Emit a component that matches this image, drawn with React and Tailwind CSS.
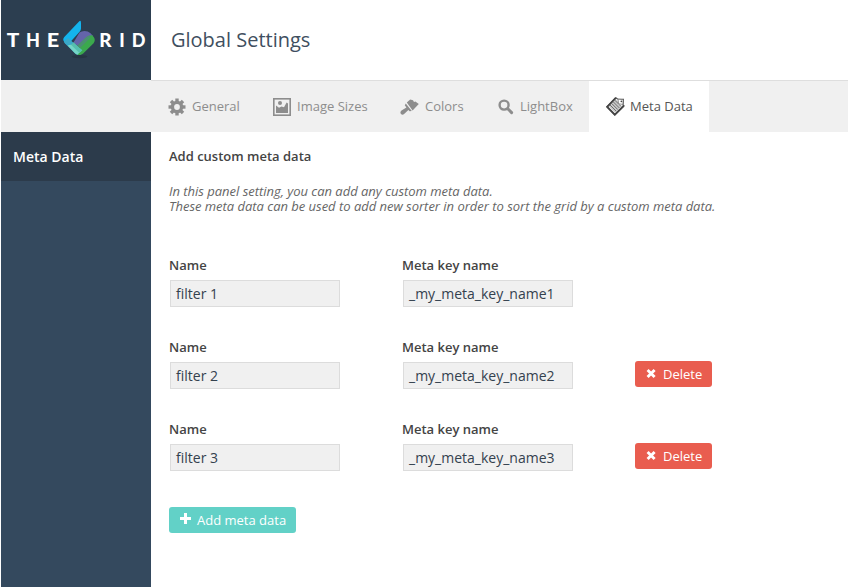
import React from "react";

function LogoMark() {
  return (
    <svg width="34" height="42" viewBox="0 0 34 42" className="shrink-0">
      <ellipse cx="17.5" cy="37.6" rx="8" ry="1.6" fill="#263543" />
      <path d="M17.3 2.2Q19 1 19 4V9.5Q19 11.4 17.6 12.8L5.4 26.2L2.3 23Q.2 20.4 2.3 18Z" fill="#14b4ee" />
      <path d="M11.5 23.5L17.5 13.5Q19.5 11.9 22.5 11.9Q26 11.9 28.5 14.3L31 17L27.5 19.5L17 27.8Z" fill="#6464aa" />
      <path d="M2 22.2L6.2 19L21 32.5L18 35.5Q15.6 36.6 13.2 34.4L2.8 24.2Q1.8 23.2 2 22.2Z" fill="#3aa9c9" />
      <path d="M5.6 26.6Q11 23.4 20.8 31.6L18.6 35.2Q15.6 36.6 13.2 34.4Z" fill="#74d5c6" />
      <path d="M30.6 16.4Q34.4 20.6 31.6 24.2L21.2 34.6Q18.4 36.8 15.6 35.4L20 31.2L15.4 26.8L24 18.4Q27.4 16 30.6 16.4Z" fill="#3ba94d" />
      <path d="M11.6 23.3L15.4 26.8L20.4 31.2L17.4 34L9 25.8Z" fill="#55bfae" />
      <path d="M15.4 26.8L24 18.4Q25.6 17.2 27.4 16.6L28 19L18 29Z" fill="#4c8f72" />
    </svg>
  );
}

function GearIcon() {
  return (
    <svg width="18" height="18" viewBox="-9 -9 18 18" fill="#8d8d8d">
      <g>
        <rect x="-1.7" y="-8.5" width="3.4" height="17" />
        <rect x="-1.7" y="-8.5" width="3.4" height="17" transform="rotate(45)" />
        <rect x="-1.7" y="-8.5" width="3.4" height="17" transform="rotate(90)" />
        <rect x="-1.7" y="-8.5" width="3.4" height="17" transform="rotate(135)" />
        <circle r="6.3" />
      </g>
      <circle r="2.9" fill="#f0f0f0" />
    </svg>
  );
}

function ImageIcon() {
  return (
    <svg width="18" height="18" viewBox="0 0 18 18" fill="#8d8d8d">
      <rect x=".8" y=".8" width="16.4" height="16.4" fill="none" stroke="#8d8d8d" strokeWidth="1.6" />
      <circle cx="7" cy="5" r="2" />
      <path d="M3 15V7.4L6 9.8L8.5 8.4L11 9.2L13.6 4.5L15 5.4V15Z" />
    </svg>
  );
}

function BrushIcon() {
  return (
    <svg width="19" height="16" viewBox="0 0 19 16" fill="#8d8d8d">
      <path d="M10.2 .4L13 1.2L14 3L15.4 2.6L18.8 5L12.6 11.4L6.8 3.6Z" />
      <path d="M5.8 4.6L11.8 12L9.6 12.2L8.4 11L4.4 14.8Q2.4 16.4 1 15Q-.4 13.4 1.5 11.6L6.4 8.4L4.8 6.2Z" />
    </svg>
  );
}

function SearchIcon() {
  return (
    <svg width="16" height="16" viewBox="0 0 16 16" fill="none" stroke="#8d8d8d">
      <circle cx="6.1" cy="6.1" r="4.5" strokeWidth="2.4" />
      <path d="M9.8 9.8L13.6 13.6" strokeWidth="3" strokeLinecap="round" />
    </svg>
  );
}

function MetaIcon() {
  return (
    <svg width="19" height="19" viewBox="0 0 19 19">
      <path d="M9.8 .8L11.6 2L17.4 2.4L17 7.8L18 8.8L8.8 17.8L1 9.8Z" fill="#fff" stroke="#505050" strokeWidth="1.2" />
      <path d="M9.8 1L1.2 9.8L8.8 17.6L17.8 8.8" fill="none" stroke="#454545" strokeWidth="1.9" />
      <path d="M9.6 2.4L12 4L12 7.4L15.6 8.4L14.6 10.2L9 15.8L3 9.8Z" fill="#c9c9c9" />
      <path d="M8.8 3.2L15 9.4M7.2 4.8L13.4 11M5.6 6.4L11.8 12.6M4 8L10.2 14.2" stroke="#555" strokeWidth=".8" />
      <path d="M12 2.2L17.2 2.6L16.8 7.4L12.6 6.8Z" fill="#fff" stroke="#666" strokeWidth=".7" />
      <circle cx="15.4" cy="4.3" r=".9" fill="#454545" />
    </svg>
  );
}

function CrossIcon() {
  return (
    <svg width="11" height="11" viewBox="0 0 11 11" className="relative -top-px mr-[6px] shrink-0">
      <path d="M1.6 2L8.6 9M8.6 2L1.6 9" stroke="#fff" strokeWidth="2.9" />
    </svg>
  );
}

function PlusIcon() {
  return (
    <svg width="11" height="11" viewBox="0 0 11 11" className="relative -top-[2px] mr-[6px] shrink-0">
      <path d="M5.5 0V11M0 5.5H11" stroke="#fff" strokeWidth="3" />
    </svg>
  );
}

function Field({ label, value }) {
  return (
    <div className="w-[233px]">
      <div className="h-[25px] text-[13px] leading-[20px] font-semibold whitespace-nowrap text-[#444]">{label}</div>
      <div className="ml-px flex h-[27px] w-[170px] items-center border border-[#dcdcdc] bg-[#f0f0f0] pl-[5px] text-[14px] text-[#34414e]">
        <span className="whitespace-nowrap">{value}</span>
      </div>
    </div>
  );
}

function MetaRow({ index, removable }) {
  return (
    <div className="flex h-[82px]">
      <Field label="Name" value={"filter " + index} />
      <Field label="Meta key name" value={"_my_meta_key_name" + index} />
      {removable && (
        <button className="mt-[24px] flex h-[26px] w-[77px] items-center rounded-[3px] bg-[#e95d4f] pl-[11px] text-[13px] text-white">
          <CrossIcon />
          <span className="pt-[2px]">Delete</span>
        </button>
      )}
    </div>
  );
}

export default function App() {
  return (
    <div className="flex h-[587px] w-[848px] overflow-hidden bg-white pl-px font-['Open_Sans',sans-serif]">
      <aside className="flex w-[150px] shrink-0 flex-col bg-[#34495e]">
        <div className="flex h-[80px] items-center bg-[#2c3e50] pl-[2px] font-['Lato',sans-serif] text-[18px] font-black text-white">
          <span className="w-[20px] scale-x-115 text-center">T</span>
          <span className="w-[20px] text-center">H</span>
          <span className="w-[20px] scale-x-120 text-center">E</span>
          <div className="-ml-px flex">
            <LogoMark />
          </div>
          <span className="ml-px w-[17px] scale-x-105 text-center">R</span>
          <span className="w-[16px] text-center">I</span>
          <span className="w-[17px] text-center">D</span>
        </div>
        <div className="h-[52px] bg-[#f0f0f0]" />
        <div className="flex h-[49px] items-center bg-[#2c3b4b] pl-[12px] text-[14px] font-semibold text-white">Meta Data</div>
      </aside>
      <main className="flex min-w-0 flex-1 flex-col">
        <header className="flex h-[81px] items-center border-b border-[#dedede] pl-[20px] text-[20px] text-[#3f4f5f]">Global Settings</header>
        <nav className="flex h-[51px] items-center bg-[#f0f0f0] text-[13px] text-[#8d8d8d]">
          <div className="flex w-[122px] items-center pl-[17px]"><GearIcon /><span className="ml-[6px]">General</span></div>
          <div className="flex w-[127px] items-center"><ImageIcon /><span className="ml-[6px]">Image Sizes</span></div>
          <div className="flex w-[98px] items-center"><BrushIcon /><span className="ml-[6px]">Colors</span></div>
          <div className="flex w-[91px] items-center"><SearchIcon /><span className="ml-[6px]">LightBox</span></div>
          <div className="flex h-full w-[120px] items-center bg-white pl-[17px] text-[#555]"><MetaIcon /><span className="ml-[5px]">Meta Data</span></div>
        </nav>
        <section className="pt-[14px] pl-[18px]">
          <h2 className="text-[13px] leading-[20px] font-semibold text-[#444]">Add custom meta data</h2>
          <p className="mt-[18px] text-[13px] leading-[15px] tracking-[-0.02px] text-[#666] italic">
            In this panel setting, you can add any custom meta data.
            <br />
            These meta data can be used to add new sorter in order to sort the grid by a custom meta data.
          </p>
          <div className="mt-[41px]">
            <MetaRow index={1} />
            <MetaRow index={2} removable />
            <MetaRow index={3} removable />
          </div>
          <button className="mt-[6px] flex h-[26px] w-[127px] items-center rounded-[3px] bg-[#62d1c7] pl-[11px] text-[13px] whitespace-nowrap text-white">
            <PlusIcon />
            <span className="relative top-px">Add meta data</span>
          </button>
        </section>
      </main>
    </div>
  );
}
